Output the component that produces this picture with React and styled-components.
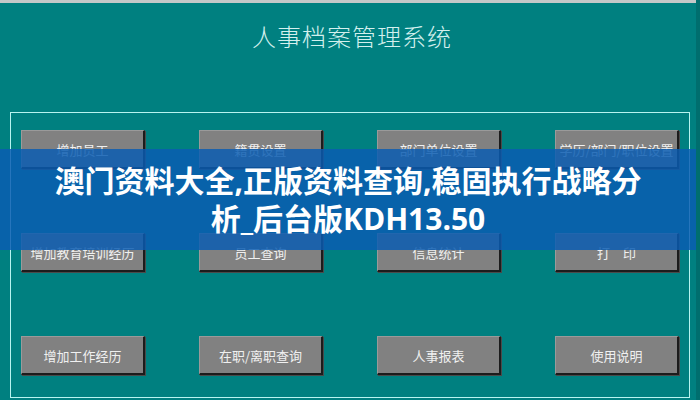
import React from 'react';
import styled, { createGlobalStyle } from 'styled-components';

const GlobalStyle = createGlobalStyle`
  html, body {
    margin: 0;
    padding: 0;
    background: #008080;
  }
  * {
    box-sizing: border-box;
  }
`;

const buttons = [
  '增加员工',
  '籍贯设置',
  '部门单位设置',
  '学历/部门/职位设置',
  '增加教育培训经历',
  '员工查询',
  '信息统计',
  '打　印',
  '增加工作经历',
  '在职/离职查询',
  '人事报表',
  '使用说明',
];

function App() {
  return (
    <>
      <GlobalStyle />
      <Screen>
        <TopStrip />
        <TitleBar>
          <Title>人事档案管理系统</Title>
        </TitleBar>
        <Panel>
          <ButtonGrid>
            {buttons.map((label) => (
              <MenuButton key={label}>{label}</MenuButton>
            ))}
          </ButtonGrid>
        </Panel>
        <Banner>
          <BannerText>
            澳门资料大全,正版资料查询,稳固执行战略分
            <br />
            析_后台版KDH13.50
          </BannerText>
        </Banner>
      </Screen>
    </>
  );
}
export default App;

const Screen = styled.div`
  position: relative;
  width: 700px;
  height: 400px;
  overflow: hidden;
  background: #008080;
  display: flex;
  flex-direction: column;
  border-right: 4px solid #006e6e;
`;

const TopStrip = styled.div`
  height: 3px;
  background: #c4c8c8;
`;

const TitleBar = styled.div`
  height: 109px;
  display: flex;
  justify-content: center;
  padding: 19px 0 0 8px;
`;

const Title = styled.div`
  font-family: "Noto Sans CJK SC", "Noto Sans", sans-serif;
  font-weight: 300;
  font-size: 24px;
  line-height: 28px;
  letter-spacing: 1px;
  color: #d4f0ee;
`;

const Panel = styled.div`
  margin: 0 6px 2px 10px;
  height: 286px;
  border: 1px solid #b8f4f0;
  padding: 17px 9px 0 10px;
`;

const ButtonGrid = styled.div`
  display: grid;
  grid-template-columns: repeat(4, 124px);
  grid-auto-rows: 39px;
  column-gap: 54px;
  row-gap: 64px;
`;

const MenuButton = styled.div`
  display: flex;
  align-items: center;
  justify-content: center;
  background: #818181;
  border-top: 1px solid #9a9a9a;
  border-left: 1px solid #9a9a9a;
  border-right: 2px solid #1c1c1c;
  border-bottom: 2px solid #1c1c1c;
  box-shadow: 1px 1px 0 #4a4a4a;
  font-family: "Noto Sans CJK SC", "Noto Sans", sans-serif;
  font-size: 13px;
  color: #f0f0f0;
  white-space: nowrap;
`;

const Banner = styled.div`
  position: absolute;
  left: 0;
  right: 0;
  top: 149px;
  height: 101px;
  background: rgba(10, 92, 178, 0.84);
  display: flex;
  align-items: center;
  justify-content: center;
`;

const BannerText = styled.div`
  font-family: "Open Sans", "Noto Sans CJK SC", sans-serif;
  font-weight: 700;
  font-size: 30px;
  line-height: 38px;
  color: #ffffff;
  text-align: center;
`;
